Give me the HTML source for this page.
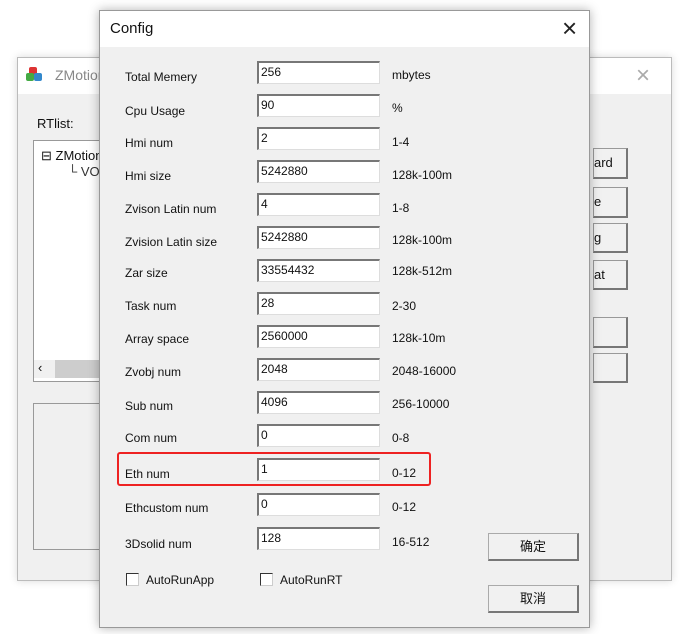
<!DOCTYPE html>
<html><head><meta charset="utf-8"><style>
body{margin:0;width:680px;height:634px;background:#fff;position:relative;overflow:hidden;font-family:"Liberation Sans","Noto Sans CJK SC",sans-serif;font-size:12px;color:#111}
.a{position:absolute}
.back{left:17px;top:57px;width:653px;height:522px;background:#f0f0f0;border:1px solid #bbb;box-shadow:0 0 8px rgba(0,0,0,.15)}
.bt{position:absolute;left:0;top:0;right:0;height:36px;background:#fff}
.bb{position:absolute;left:575px;width:32px;background:#f1f1f1;border:1px solid #999;border-right:2px solid #777;border-bottom:2px solid #777;font-size:13px;line-height:27px}
.dlg{left:99px;top:10px;width:489px;height:616px;background:#f0f0f0;border:1px solid #999;box-shadow:0 0 10px rgba(0,0,0,.3)}
.dt{position:absolute;left:0;top:0;right:0;height:36px;background:#fff}
.lb{position:absolute;left:25px;font-size:12px}
.in{position:absolute;left:157px;width:118px;height:20px;background:#fff;border-top:2px solid #777;border-left:2px solid #777;border-right:1px solid #ddd;border-bottom:1px solid #ddd;font-size:12px;line-height:19px;padding-left:2px;box-sizing:content-box}
.rg{position:absolute;left:292px;font-size:12px}
.btn{position:absolute;left:388px;width:88px;height:25px;background:#f1f1f1;border:1px solid #aaa;border-right:2px solid #777;border-bottom:2px solid #777;text-align:center;line-height:25px;font-size:13px}
.cb{position:absolute;width:11px;height:11px;border:1px solid #333;border-right-color:#ccc;border-bottom-color:#ccc;background:#fff}
</style></head><body>
<div class="a back">
 <div class="bt">
  <div class="a" style="left:11px;top:9px;width:8px;height:8px;background:#d33;border-radius:2px"></div>
  <div class="a" style="left:8px;top:15px;width:8px;height:8px;background:#4a4;border-radius:2px"></div>
  <div class="a" style="left:16px;top:15px;width:8px;height:8px;background:#38c;border-radius:2px"></div>
  <div class="a" style="left:37px;top:9px;font-size:14px;color:#888">ZMotion</div>
  <div class="a" style="left:618px;top:4px;font-size:24px;font-weight:300;color:#aaa">×</div>
 </div>
 <div class="a" style="left:19px;top:58px;font-size:13px">RTlist:</div>
 <div class="a" style="left:15px;top:82px;width:80px;height:240px;background:#fff;border:1px solid #999"></div>
 <div class="a" style="left:23px;top:90px;font-size:13px">⊟ ZMotion</div>
 <div class="a" style="left:50px;top:106px;font-size:13px;color:#333">└ VO</div>
 <div class="a" style="left:16px;top:302px;width:80px;height:18px;background:#f0f0f0"></div>
 <div class="a" style="left:20px;top:302px;font-size:13px">‹</div>
 <div class="a" style="left:37px;top:302px;width:50px;height:18px;background:#cdcdcd"></div>
 <div class="a" style="left:15px;top:345px;width:80px;height:145px;border:1px solid #999;border-right:none"></div>
 <div class="bb" style="top:90px;height:28px">ard</div>
 <div class="bb" style="top:129px;height:28px">e</div>
 <div class="bb" style="top:165px;height:27px">g</div>
 <div class="bb" style="top:202px;height:27px">at</div>
 <div class="bb" style="top:259px;height:28px"></div>
 <div class="bb" style="top:295px;height:27px"></div>
</div>
<div class="a dlg">
 <div class="dt"><div class="a" style="left:10px;top:9px;font-size:15px">Config</div>
 <div class="a" style="left:462px;top:2px;font-size:26px;font-weight:300;color:#222">×</div></div>
 <div class="lb" style="top:59px">Total Memery</div><div class="in" style="top:50px">256</div><div class="rg" style="top:57px">mbytes</div>
 <div class="lb" style="top:93px">Cpu Usage</div><div class="in" style="top:83px">90</div><div class="rg" style="top:90px">%</div>
 <div class="lb" style="top:125px">Hmi num</div><div class="in" style="top:116px">2</div><div class="rg" style="top:124px">1-4</div>
 <div class="lb" style="top:158px">Hmi size</div><div class="in" style="top:149px">5242880</div><div class="rg" style="top:157px">128k-100m</div>
 <div class="lb" style="top:191px">Zvison Latin num</div><div class="in" style="top:182px">4</div><div class="rg" style="top:190px">1-8</div>
 <div class="lb" style="top:224px">Zvision Latin size</div><div class="in" style="top:215px">5242880</div><div class="rg" style="top:222px">128k-100m</div>
 <div class="lb" style="top:255px">Zar size</div><div class="in" style="top:248px">33554432</div><div class="rg" style="top:253px">128k-512m</div>
 <div class="lb" style="top:288px">Task num</div><div class="in" style="top:281px">28</div><div class="rg" style="top:288px">2-30</div>
 <div class="lb" style="top:321px">Array space</div><div class="in" style="top:314px">2560000</div><div class="rg" style="top:320px">128k-10m</div>
 <div class="lb" style="top:354px">Zvobj num</div><div class="in" style="top:347px">2048</div><div class="rg" style="top:353px">2048-16000</div>
 <div class="lb" style="top:388px">Sub num</div><div class="in" style="top:380px">4096</div><div class="rg" style="top:386px">256-10000</div>
 <div class="lb" style="top:420px">Com num</div><div class="in" style="top:413px">0</div><div class="rg" style="top:420px">0-8</div>
 <div class="lb" style="top:456px">Eth num</div><div class="in" style="top:447px">1</div><div class="rg" style="top:455px">0-12</div>
 <div class="a" style="left:17px;top:441px;width:310px;height:30px;border:2px solid #e22;border-radius:3px"></div>
 <div class="lb" style="top:490px">Ethcustom num</div><div class="in" style="top:482px">0</div><div class="rg" style="top:489px">0-12</div>
 <div class="lb" style="top:526px">3Dsolid num</div><div class="in" style="top:516px">128</div><div class="rg" style="top:524px">16-512</div>
 <div class="btn" style="top:522px">确定</div>
 <div class="btn" style="top:574px">取消</div>
 <div class="cb" style="left:26px;top:562px"></div><div class="a" style="left:46px;top:562px;font-size:12px">AutoRunApp</div>
 <div class="cb" style="left:160px;top:562px"></div><div class="a" style="left:180px;top:562px;font-size:12px">AutoRunRT</div>
</div>
</body></html>
